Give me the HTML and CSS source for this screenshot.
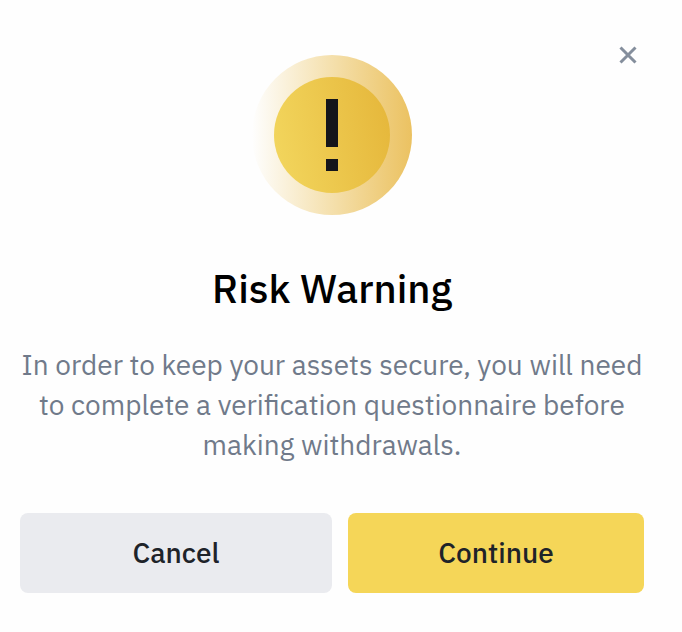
FILE: index.html
```html
<!DOCTYPE html>
<html lang="en">
<head>
    <meta charset="UTF-8">
    <meta name="viewport" content="width=device-width, initial-scale=1.0">
    <title>Risk Warning</title>
    <link rel="stylesheet" href="styles.css">
</head>
<body>
    <div class="modal" role="dialog" aria-labelledby="modal-title">
        <button type="button" class="close" aria-label="Close">
            <svg width="18" height="18" viewBox="0 0 18 18">
                <path d="M1.5 1.5 L16.5 16.5 M16.5 1.5 L1.5 16.5" stroke="#848e9c" stroke-width="3" fill="none"/>
            </svg>
        </button>

        <svg class="warning-icon" width="160" height="160" viewBox="0 0 160 160" aria-hidden="true">
            <defs>
                <linearGradient id="ring" x1="0" y1="0" x2="1" y2="0">
                    <stop offset="0" stop-color="#e9ba41" stop-opacity="0"/>
                    <stop offset="1" stop-color="#e9bb50" stop-opacity="0.9"/>
                </linearGradient>
                <linearGradient id="coin" x1="0" y1="0.6" x2="1" y2="0.4">
                    <stop offset="0" stop-color="#f2d55c"/>
                    <stop offset="1" stop-color="#e6b83c"/>
                </linearGradient>
            </defs>
            <circle cx="80" cy="80" r="80" fill="url(#ring)"/>
            <circle cx="80" cy="80" r="58" fill="url(#coin)"/>
            <rect x="74" y="44" width="12" height="48" fill="#14151a"/>
            <rect x="74" y="104" width="12" height="12" fill="#14151a"/>
        </svg>

        <h1 id="modal-title">Risk Warning</h1>
        <p>In order to keep your assets secure, you will need to complete a verification questionnaire before making withdrawals.</p>

        <div class="buttons">
            <button type="button" class="cancel-btn">Cancel</button>
            <button type="button" class="continue-btn">Continue</button>
        </div>
    </div>
</body>
</html>
```
FILE: styles.css
```css
body {
    font-family: "IBM Plex Sans", Roboto, sans-serif;
    background-color: #fefefe;
    margin: 0;
}

.modal {
    position: relative;
    padding: 55px 38px 39px 20px;
    text-align: center;
}

.close {
    position: absolute;
    top: 40px;
    right: 39px;
    display: flex;
    padding: 6px;
    border: none;
    background: none;
    cursor: pointer;
}

.warning-icon {
    display: block;
    margin: 0 auto;
}

h1 {
    margin: 45px 0 29px;
    font-size: 40px;
    font-weight: 500;
    line-height: 56px;
    color: #000;
}

p {
    margin: 0;
    font-size: 28px;
    line-height: 40px;
    color: #707a8a;
}

.buttons {
    display: grid;
    grid-template-columns: 39fr 37fr;
    gap: 16px;
    margin-top: 48px;
}

.cancel-btn,
.continue-btn {
    height: 80px;
    padding: 0 16px 2px;
    border: none;
    border-radius: 8px;
    font-family: inherit;
    font-size: 28px;
    font-weight: 500;
    color: #1e2329;
    cursor: pointer;
}

.cancel-btn {
    background-color: #eaebef;
}

.continue-btn {
    background-color: #f5d658;
}
```
